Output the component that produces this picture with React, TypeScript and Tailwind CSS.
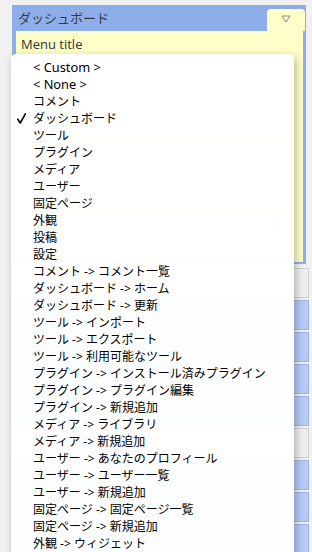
import React from "react";

const items: string[] = [
  "< Custom >",
  "< None >",
  "コメント",
  "ダッシュボード",
  "ツール",
  "プラグイン",
  "メディア",
  "ユーザー",
  "固定ページ",
  "外観",
  "投稿",
  "設定",
  "コメント -> コメント一覧",
  "ダッシュボード -> ホーム",
  "ダッシュボード -> 更新",
  "ツール -> インポート",
  "ツール -> エクスポート",
  "ツール -> 利用可能なツール",
  "プラグイン -> インストール済みプラグイン",
  "プラグイン -> プラグイン編集",
  "プラグイン -> 新規追加",
  "メディア -> ライブラリ",
  "メディア -> 新規追加",
  "ユーザー -> あなたのプロフィール",
  "ユーザー -> ユーザー一覧",
  "ユーザー -> 新規追加",
  "固定ページ -> 固定ページ一覧",
  "固定ページ -> 新規追加",
  "外観 -> ウィジェット",
];

const rows: { gray?: boolean }[] = [
  { gray: true },
  {},
  {},
  {},
  {},
  { gray: true },
  {},
  {},
  {},
];

export default function App() {
  return (
    <div className="relative w-[312px] h-[552px] overflow-hidden bg-[#f1f1f1] font-['Open_Sans','Noto_Sans_CJK_JP',sans-serif]">
      <div className="flex flex-col pl-[12px] pr-[3px] pt-[5px]">
        {/* Blue menu panel */}
        <div className="mr-[3px] bg-[#8eaeeb] pb-[2px]">
          <div className="flex h-[26px] items-start justify-between">
            <div className="pl-[6px] pt-[5px] text-[13px] leading-[16px] text-[#3a3a3a]">
              ダッシュボード
            </div>
            <div className="mt-[4px] mr-[1px] flex h-[22px] w-[38px] items-start justify-center rounded-t-[4px] bg-[#fefec9] pt-[6px]">
              <svg width="10" height="8" viewBox="0 0 10 8">
                <path d="M1 1 L9 1 L5 7 Z" fill="none" stroke="#8a8a8a" strokeWidth="1" />
              </svg>
            </div>
          </div>
          <div className="ml-[4px] mr-[3px] flex h-[231px] flex-col bg-[#fefec9] px-[4px] pt-[6px]">
            <div className="pl-[1px] text-[13px] leading-[14px] text-[#333]">Menu title</div>
            <div className="mt-[9px] mr-[7px] flex h-[24px]">
              <div className="flex-1 border border-[#c8c8c8] bg-white" />
              <div className="ml-[1px] w-[19px] border border-[#c8c8c8] bg-[#f4f4f4]" />
            </div>
            <div className="mt-[8px] h-[14px]" />
            <div className="mt-[5px] mr-[14px] flex h-[27px] items-center justify-end rounded-[4px] border border-[#d0d0d0] bg-white pr-[4px]">
              <svg width="6" height="10" viewBox="0 0 6 10">
                <path d="M0.5 4 L3 1 L5.5 4 M0.5 6 L3 9 L5.5 6" fill="none" stroke="#999" strokeWidth="1" />
              </svg>
            </div>
            <div className="mt-[8px] h-[14px]" />
            <div className="mt-[4px] mr-[7px] h-[24px] border border-[#c8c8c8] bg-white" />
            <div className="mt-[8px] h-[14px]" />
            <div className="mt-[4px] mr-[14px] flex h-[23px] items-center justify-end rounded-[3px] border border-[#c8c8c8] bg-white pr-[6px]">
              <svg width="8" height="6" viewBox="0 0 8 6">
                <path d="M0 0 L8 0 L4 6 Z" fill="#777" />
              </svg>
            </div>
          </div>
        </div>

        {/* Menu rows */}
        <div className="mt-[4px] flex flex-col gap-[2px]">
          {rows.map((r, i) => (
            <div
              key={i}
              className={
                r.gray
                  ? "h-[30px] border border-[#cfcfcf] bg-[#f0f0f0]"
                  : "h-[30px] border border-[#9fb5e3] bg-[#b6caf5]"
              }
            />
          ))}
        </div>
      </div>

      {/* Open dropdown menu */}
      <div className="absolute left-[11px] top-[54px] h-[520px] w-[283px] rounded-t-[5px] bg-[rgba(255,255,255,0.97)] pt-[5px] shadow-[2px_3px_9px_rgba(0,0,0,0.28)] font-['Noto_Sans','Noto_Sans_CJK_JP',sans-serif]">
        {items.map((t, i) => (
          <div
            key={i}
            className={
              i < 2
                ? "relative h-[17px] whitespace-pre pl-[22px] text-[12.8px] leading-[17px] text-black"
                : "relative h-[17px] whitespace-pre pl-[22px] text-[12px] leading-[17px] text-black"
            }
          >
            {i === 3 && (
              <svg
                className="absolute left-[6px] top-[3px]"
                width="9"
                height="11"
                viewBox="0 0 9 11"
              >
                <path
                  d="M0.8 6.2 L3.2 10 L8.4 0.8"
                  fill="none"
                  stroke="#111"
                  strokeWidth="1.7"
                  strokeLinejoin="round"
                  strokeLinecap="round"
                />
              </svg>
            )}
            {t}
          </div>
        ))}
      </div>
    </div>
  );
}
